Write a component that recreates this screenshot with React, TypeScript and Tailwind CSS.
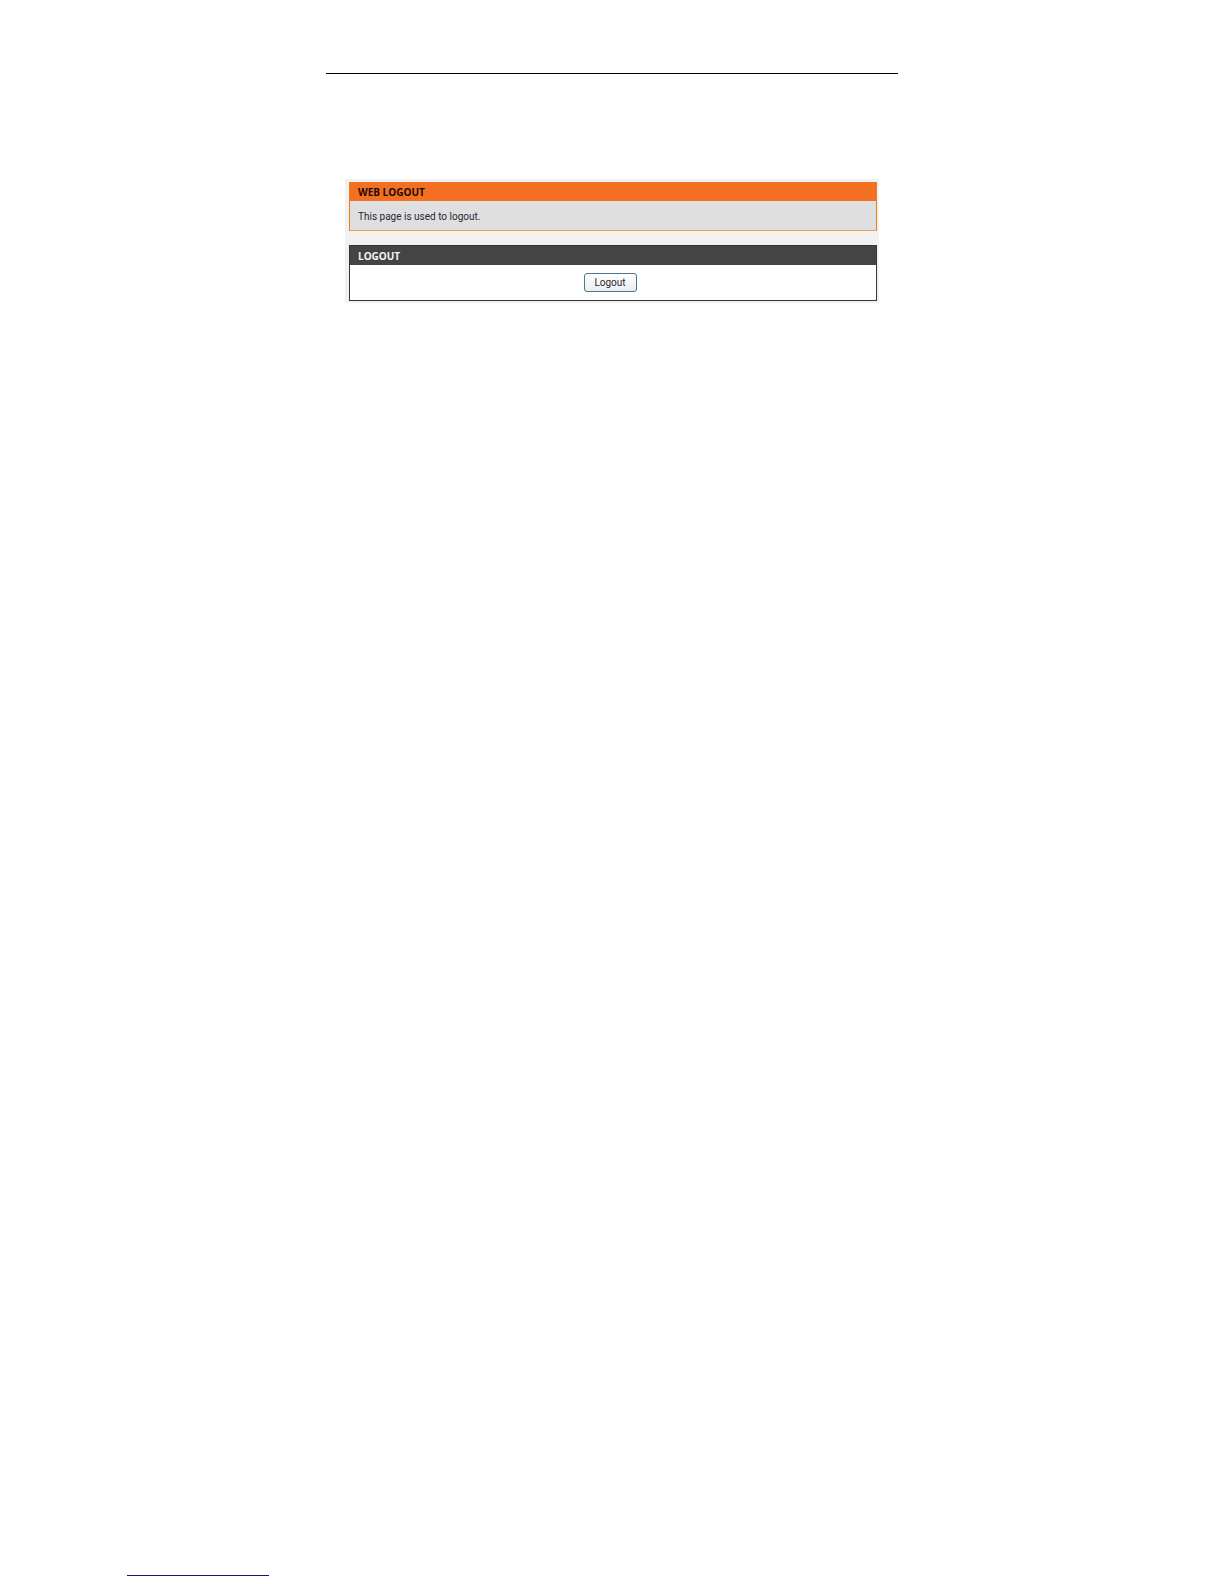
const panels = {
  intro: {
    title: "WEB LOGOUT",
    description: "This page is used to logout.",
  },
  action: {
    title: "LOGOUT",
    button: "Logout",
  },
};

export default function App() {
  return (
    <div className="flex min-h-screen flex-col bg-white font-['Roboto',sans-serif]">
      <header className="w-full pt-[73px]">
        <hr className="mx-auto w-full max-w-[572px] border-t border-black" />
      </header>

      <main className="mx-auto mt-[105px] w-full max-w-[534px] bg-[#f1f1f1] pt-[3px] pr-[2px] pb-[2px] pl-1">
        <section className="border border-[#f0a057] border-x-[#f17a1c] border-t-[#f36f21] bg-[#dfdfdf]">
          <h1 className="bg-[#f36f21] px-2 font-['Open_Sans',sans-serif] text-[10px] leading-[18px] font-bold text-[#1c0c04]">
            {panels.intro.title}
          </h1>
          <p className="px-2 pt-[7px] pb-[5px] text-[10px] leading-[17px] text-[#2a2433]">
            {panels.intro.description}
          </p>
        </section>

        <section className="mt-[14px] border border-[#333537] bg-white">
          <h2 className="bg-[#434443] px-2 pt-px font-['Open_Sans',sans-serif] text-[10px] leading-[18px] font-bold text-[#f4f4f4]">
            {panels.action.title}
          </h2>
          <div className="flex justify-center py-2 pr-[6px]">
            <button
              type="button"
              className="h-[19px] w-[53px] rounded-[3px] border border-[#4c7590] bg-gradient-to-b from-white to-[#e9eeee] text-[10px] leading-[16px] text-[#2a2433]"
            >
              {panels.action.button}
            </button>
          </div>
        </section>
      </main>

      <footer className="mt-auto pb-2 pl-[127px]">
        <hr className="w-[142px] border-t border-[#10108a]" />
      </footer>
    </div>
  );
}
